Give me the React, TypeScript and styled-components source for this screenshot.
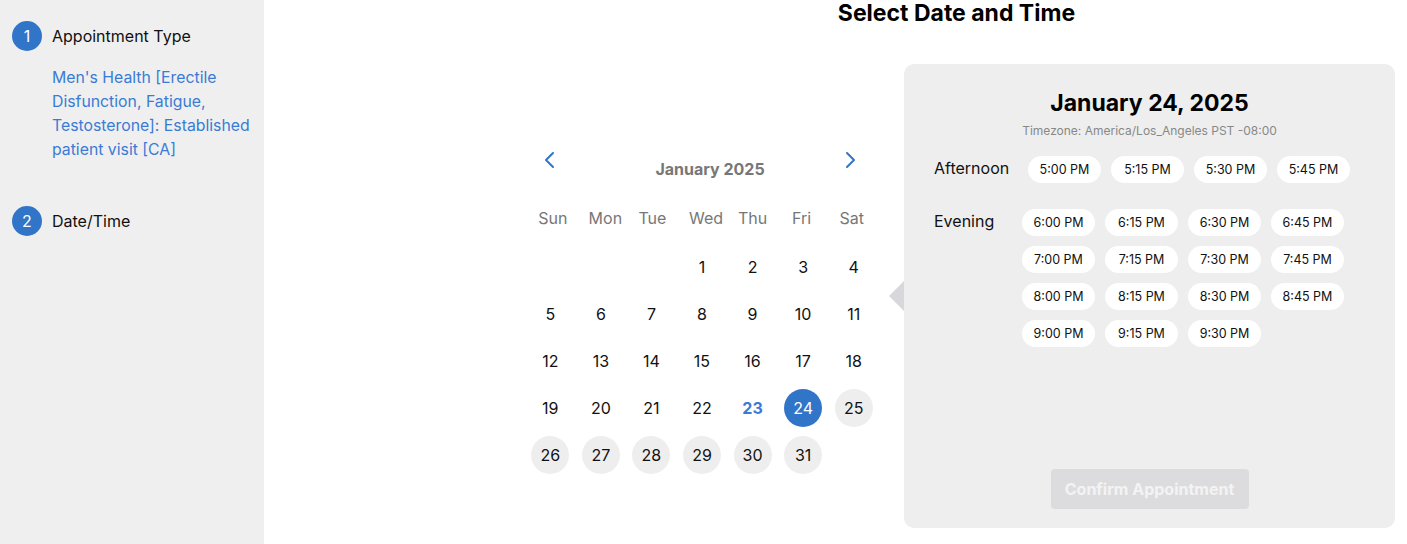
import React from "react";
import styled, { createGlobalStyle } from "styled-components";

const Global = createGlobalStyle`
  html, body { margin: 0; padding: 0; background: #ffffff; }
  body { font-family: Inter, "Noto Sans", sans-serif; color: #000; }
  * { box-sizing: border-box; }
`;

const Page = styled.div`
  display: flex;
  width: 1407px;
  height: 544px;
  overflow: hidden;
`;

const Sidebar = styled.aside`
  width: 264px;
  flex-shrink: 0;
  background: #efefef;
  padding: 21px 0 0 12px;
  display: flex;
  flex-direction: column;
`;

const Step = styled.div<{ $gap?: number }>`
  display: flex;
  align-items: center;
  gap: 10px;
  margin-top: ${(p) => p.$gap ?? 0}px;
`;

const StepNum = styled.div`
  width: 30px;
  height: 30px;
  border-radius: 50%;
  background: #3175c9;
  color: #fff;
  font-size: 16px;
  display: flex;
  align-items: center;
  justify-content: center;
`;

const StepLabel = styled.div`
  font-size: 16px;
  color: #111;
`;

const StepDesc = styled.div`
  margin: 15px 0 0 40px;
  width: 206px;
  font-size: 15.8px;
  line-height: 24px;
  color: #3a7bd5;
`;

const Main = styled.main`
  flex: 1;
  display: flex;
  padding-left: 254px;
`;

const Wrapper = styled.div`
  width: 877px;
  display: flex;
  flex-direction: column;
`;

const Title = styled.h1`
  margin: 0;
  font-size: 23px;
  line-height: 26px;
  font-weight: 700;
  text-align: center;
`;

const Row = styled.div`
  display: flex;
  margin-top: 38px;
  padding-left: 7px;
  gap: 25px;
`;

const Calendar = styled.div`
  width: 354px;
  padding-top: 86px;
`;

const CalHeader = styled.div`
  display: flex;
  height: 38px;
  padding: 0 19px 0 15px;
`;

const Chevron = styled.button`
  width: 20px;
  height: 20px;
  border: 0;
  padding: 0;
  background: none;
  color: #3175c9;
  display: flex;
  align-items: center;
  justify-content: center;
`;

const MonthTitle = styled.div`
  flex: 1;
  text-align: center;
  padding-left: 20px;
  line-height: 38px;
  font-size: 16px;
  font-weight: 700;
  color: #777;
`;

const Grid = styled.div`
  display: grid;
  grid-template-columns: repeat(7, 1fr);
  row-gap: 9px;
  margin-top: 11px;
`;

const DayName = styled.div<{ $shift?: number }>`
  height: 38px;
  line-height: 38px;
  text-align: center;
  font-size: 16px;
  color: #777;
  margin: 0 0 2px ${(p) => p.$shift ?? 0}px;
`;

const DayCell = styled.div`
  display: flex;
  justify-content: center;
`;

const Day = styled.div<{ $variant: "plain" | "today" | "selected" | "avail" }>`
  width: 38px;
  height: 38px;
  border-radius: 50%;
  display: flex;
  align-items: center;
  justify-content: center;
  font-size: 16px;
  background: ${(p) =>
    p.$variant === "selected" ? "#3175c9" : p.$variant === "avail" ? "#eeeeee" : "transparent"};
  color: ${(p) =>
    p.$variant === "selected" ? "#fff" : p.$variant === "today" ? "#3a7bd5" : "#111"};
  font-weight: ${(p) => (p.$variant === "today" ? 700 : 400)};
`;

const Panel = styled.section`
  position: relative;
  width: 491px;
  height: 464px;
  background: #eeeeee;
  border-radius: 10px;
  padding: 24px 30px 19px;
  display: flex;
  flex-direction: column;
`;

const Pointer = styled.div`
  position: absolute;
  left: -15px;
  top: 217px;
  width: 0;
  height: 0;
  border-top: 15px solid transparent;
  border-bottom: 15px solid transparent;
  border-right: 15px solid #d8d8dc;
`;

const PanelTitle = styled.h2`
  margin: 0;
  text-align: center;
  font-size: 23px;
  line-height: 30px;
  font-weight: 700;
`;

const Timezone = styled.div`
  margin-top: 5px;
  text-align: center;
  font-size: 12px;
  line-height: 16px;
  color: #888;
`;

const Period = styled.div<{ $top: number }>`
  display: flex;
  margin-top: ${(p) => p.$top}px;
`;

const PeriodLabel = styled.div<{ $w: number }>`
  width: ${(p) => p.$w}px;
  flex-shrink: 0;
  font-size: 16px;
  line-height: 25px;
  color: #111;
`;

const Slots = styled.div`
  display: grid;
  grid-template-columns: repeat(4, 73px);
  gap: 10px;
`;

const Slot = styled.button`
  width: 73px;
  height: 27px;
  border: 0;
  border-radius: 14px;
  background: #fff;
  font-family: inherit;
  font-size: 12.5px;
  color: #111;
  padding: 0;
`;

const Confirm = styled.button`
  margin-top: auto;
  align-self: center;
  width: 198px;
  height: 40px;
  border: 0;
  border-radius: 4px;
  background: #dcdcde;
  color: #f3f3f3;
  font-family: inherit;
  font-size: 16px;
  font-weight: 700;
`;

const ChevronIcon = ({ dir }: { dir: "left" | "right" }) => (
  <svg width="14" height="18" viewBox="0 0 14 18" fill="none">
    <path
      d={dir === "left" ? "M10 2 L3 9 L10 16" : "M4 2 L11 9 L4 16"}
      stroke="currentColor"
      strokeWidth="2"
      strokeLinecap="round"
      strokeLinejoin="round"
    />
  </svg>
);

const dayNames: [string, number][] = [
  ["Sun", 5],
  ["Mon", 9],
  ["Tue", 2],
  ["Wed", 8],
  ["Thu", 0],
  ["Fri", -3],
  ["Sat", -4],
];

const afternoon = ["5:00 PM", "5:15 PM", "5:30 PM", "5:45 PM"];
const evening = [
  "6:00 PM", "6:15 PM", "6:30 PM", "6:45 PM",
  "7:00 PM", "7:15 PM", "7:30 PM", "7:45 PM",
  "8:00 PM", "8:15 PM", "8:30 PM", "8:45 PM",
  "9:00 PM", "9:15 PM", "9:30 PM",
];

const variantFor = (d: number): "plain" | "today" | "selected" | "avail" => {
  if (d === 23) return "today";
  if (d === 24) return "selected";
  if (d >= 25) return "avail";
  return "plain";
};

export default function App() {
  const cells: (number | null)[] = [null, null, null];
  for (let d = 1; d <= 31; d++) cells.push(d);

  return (
    <>
      <Global />
      <Page>
        <Sidebar>
          <Step>
            <StepNum>1</StepNum>
            <StepLabel>Appointment Type</StepLabel>
          </Step>
          <StepDesc>
            Men's Health [Erectile Disfunction, Fatigue, Testosterone]: Established patient visit [CA]
          </StepDesc>
          <Step $gap={44}>
            <StepNum>2</StepNum>
            <StepLabel>Date/Time</StepLabel>
          </Step>
        </Sidebar>
        <Main>
          <Wrapper>
            <Title>Select Date and Time</Title>
            <Row>
              <Calendar>
                <CalHeader>
                  <Chevron aria-label="Previous month">
                    <ChevronIcon dir="left" />
                  </Chevron>
                  <MonthTitle>January 2025</MonthTitle>
                  <Chevron aria-label="Next month">
                    <ChevronIcon dir="right" />
                  </Chevron>
                </CalHeader>
                <Grid>
                  {dayNames.map(([n, s]) => (
                    <DayName key={n} $shift={s}>
                      {n}
                    </DayName>
                  ))}
                  {cells.map((d, i) => (
                    <DayCell key={i}>
                      {d !== null && <Day $variant={variantFor(d)}>{d}</Day>}
                    </DayCell>
                  ))}
                </Grid>
              </Calendar>
              <Panel>
                <Pointer />
                <PanelTitle>January 24, 2025</PanelTitle>
                <Timezone>Timezone: America/Los_Angeles PST -08:00</Timezone>
                <Period $top={17}>
                  <PeriodLabel $w={94}>Afternoon</PeriodLabel>
                  <Slots>
                    {afternoon.map((t) => (
                      <Slot key={t}>{t}</Slot>
                    ))}
                  </Slots>
                </Period>
                <Period $top={26}>
                  <PeriodLabel $w={88}>Evening</PeriodLabel>
                  <Slots>
                    {evening.map((t) => (
                      <Slot key={t}>{t}</Slot>
                    ))}
                  </Slots>
                </Period>
                <Confirm disabled>Confirm Appointment</Confirm>
              </Panel>
            </Row>
          </Wrapper>
        </Main>
      </Page>
    </>
  );
}
